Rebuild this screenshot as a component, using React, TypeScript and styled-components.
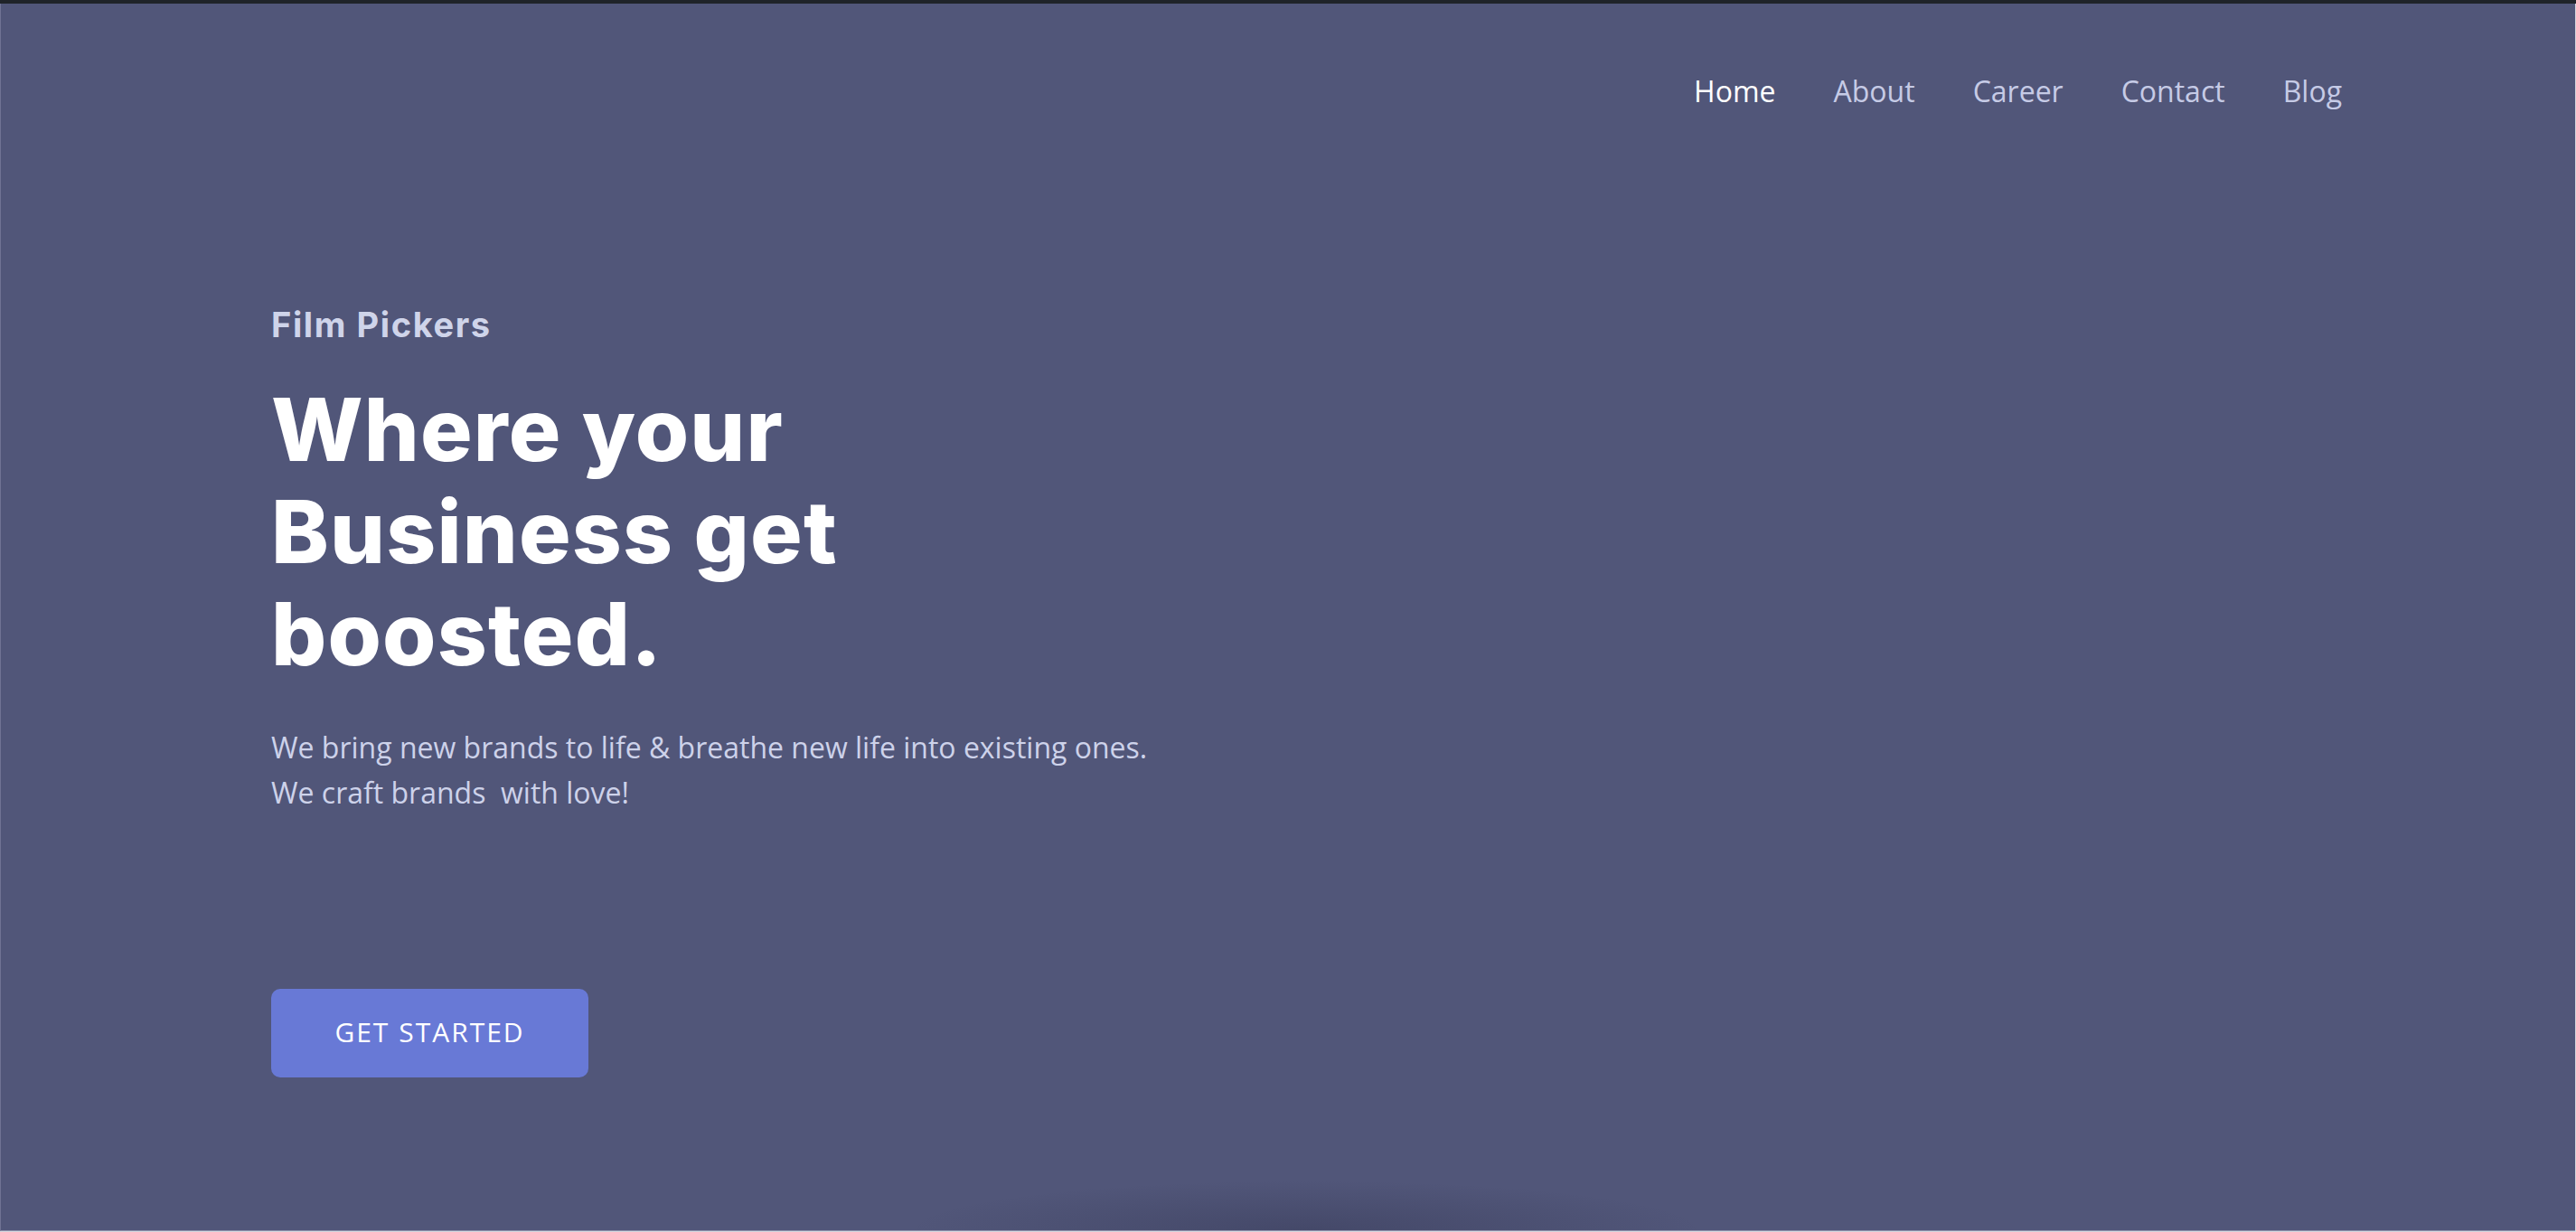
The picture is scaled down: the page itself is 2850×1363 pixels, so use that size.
import React from "react";
import styled, { createGlobalStyle } from "styled-components";

const GlobalStyle = createGlobalStyle`
  html, body {
    margin: 0;
    padding: 0;
    background: #d6d7de;
  }
  * { box-sizing: border-box; }
`;

const Page = styled.div`
  display: flex;
  flex-direction: column;
  width: 2850px;
  height: 1363px;
  overflow: hidden;
`;

const TopStrip = styled.div`
  height: 4px;
  flex: 0 0 4px;
  background: #1f2329;
`;

const Hero = styled.section`
  display: flex;
  flex-direction: column;
  height: 1358px;
  margin-right: 1px;
  border-left: 1px solid #6f7293;
  border-bottom: 1px solid #8c8ea9;
  padding: 0 258px 0 299px;
  background:
    radial-gradient(ellipse 440px 55px at 50.7% 100%, rgba(35, 37, 62, 0.28), rgba(35, 37, 62, 0) 100%),
    #515679;
`;

const Nav = styled.nav`
  display: flex;
  justify-content: flex-end;
  gap: 64px;
  padding-top: 75px;
`;

const NavLink = styled.a<{ $active?: boolean }>`
  font-family: "Open Sans", "Noto Sans", sans-serif;
  font-weight: 400;
  font-size: 32px;
  line-height: 44px;
  color: ${(p) => (p.$active ? "#ffffff" : "#c6cbe6")};
  text-decoration: none;
  cursor: pointer;
`;

const Content = styled.div`
  display: flex;
  flex-direction: column;
  align-items: flex-start;
`;

const Brand = styled.h3`
  margin: 213px 0 0;
  font-family: Inter, "Noto Sans", sans-serif;
  font-weight: 700;
  font-size: 38px;
  line-height: 46px;
  letter-spacing: 1.6px;
  color: #cfd4ea;
`;

const Title = styled.h1`
  margin: 37px 0 0;
  font-family: Inter, "Noto Sans", sans-serif;
  font-weight: 800;
  font-size: 96px;
  line-height: 113px;
  letter-spacing: 1.2px;
  color: #ffffff;
`;

const Lead = styled.p`
  margin: 44px 0 0;
  font-family: "Open Sans", "Noto Sans", sans-serif;
  font-weight: 400;
  font-size: 32px;
  line-height: 50px;
  color: #cdd2ea;
  white-space: pre-wrap;
`;

const Button = styled.button`
  margin-top: 192px;
  width: 351px;
  height: 98px;
  padding: 0 0 3px;
  border: none;
  border-radius: 10px;
  background: #6879d6;
  color: #ffffff;
  font-family: "Open Sans", "Noto Sans", sans-serif;
  font-weight: 400;
  font-size: 30px;
  letter-spacing: 2px;
  text-transform: uppercase;
  cursor: pointer;
`;

const links = ["Home", "About", "Career", "Contact", "Blog"];

export default function App() {
  return (
    <>
      <GlobalStyle />
      <Page>
        <TopStrip />
        <Hero>
          <Nav>
            {links.map((l, i) => (
              <NavLink key={l} $active={i === 0}>
                {l}
              </NavLink>
            ))}
          </Nav>
          <Content>
            <Brand>Film Pickers</Brand>
            <Title>
              Where your
              <br />
              Business get
              <br />
              boosted.
            </Title>
            <Lead>
              {"We bring new brands to life & breathe new life into existing ones.\nWe craft brands  with love!"}
            </Lead>
            <Button>Get Started</Button>
          </Content>
        </Hero>
      </Page>
    </>
  );
}
